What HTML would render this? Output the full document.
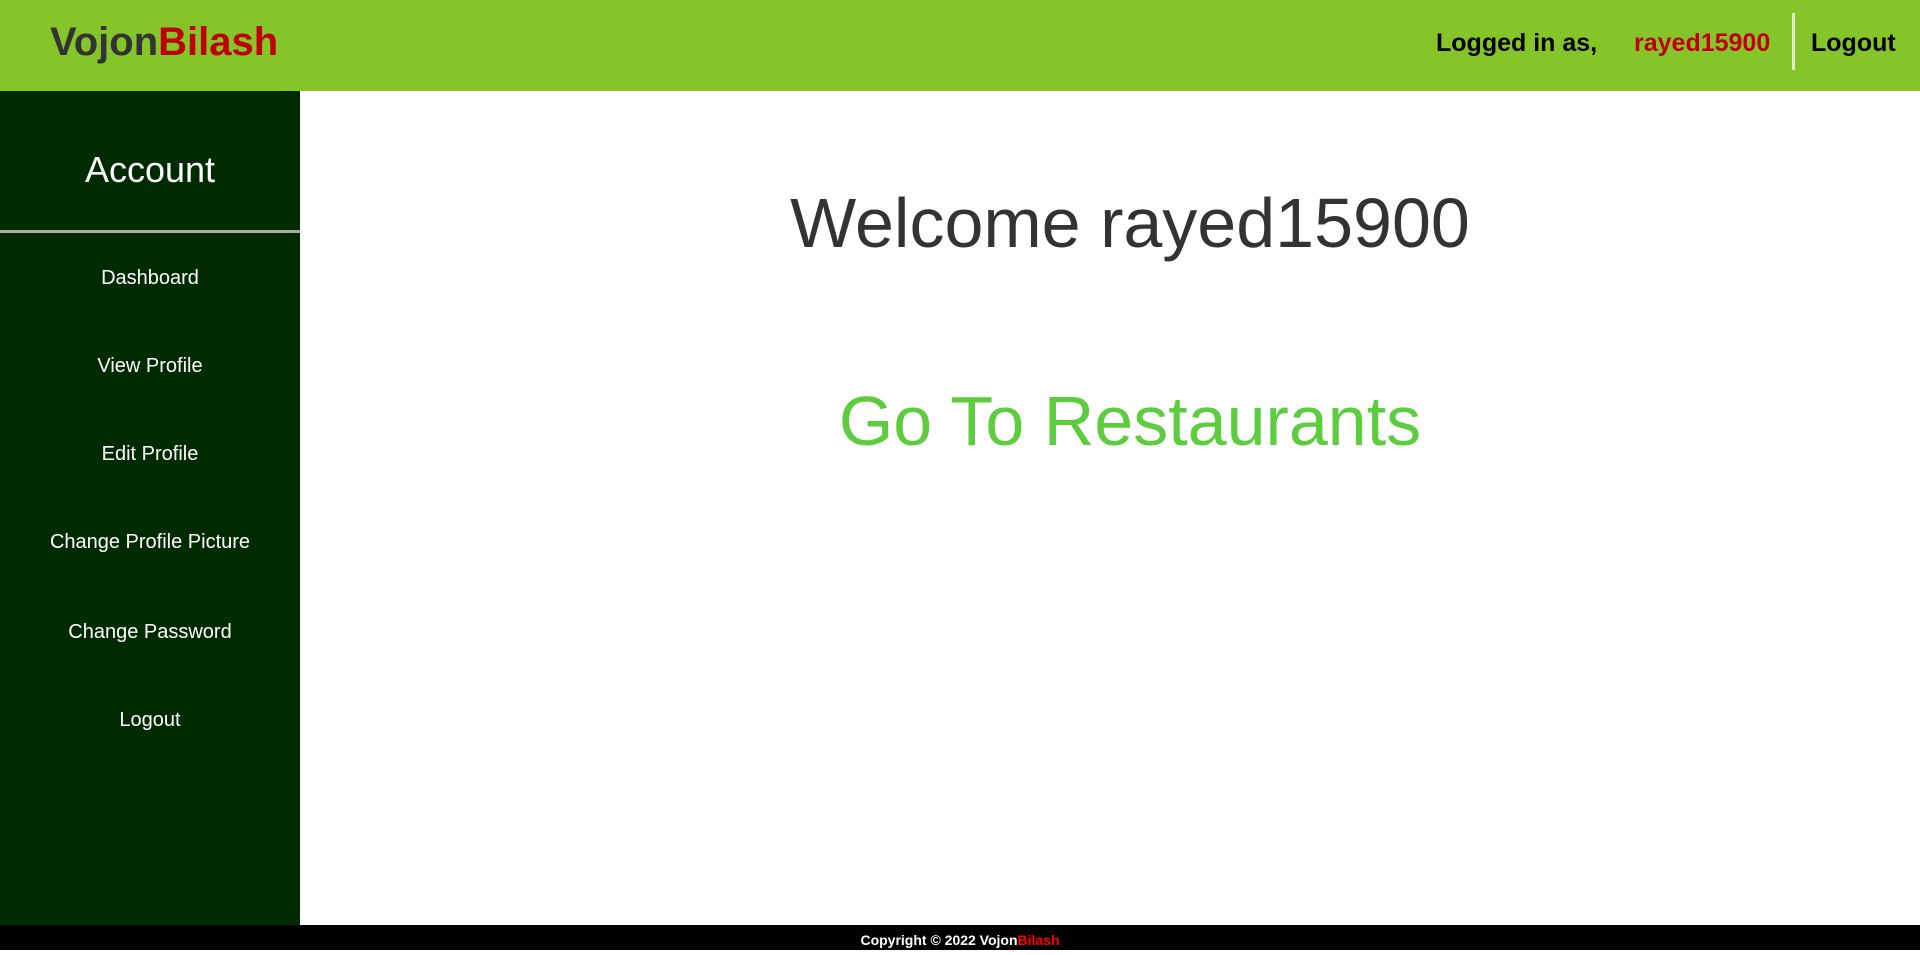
<!DOCTYPE html>
<html><head><meta charset="utf-8"><style>
*{margin:0;padding:0;box-sizing:border-box}
body{width:1920px;height:950px;overflow:hidden;font-family:"Liberation Sans",Arial,sans-serif;background:#fff;position:relative}
.hdr{position:absolute;left:0;top:0;width:1920px;height:91px;background:#85c52a}
.logo{position:absolute;left:50px;top:20px;font-size:40px;font-weight:bold;color:#333;line-height:45px}
.red{color:#c00000}
.r{position:absolute;top:28px;font-size:25px;font-weight:bold;line-height:30px;color:#000;white-space:nowrap}
.div{position:absolute;left:1792px;top:13px;width:3px;height:57px;background:#dff0c4}
.side{position:absolute;left:0;top:91px;width:300px;height:834px;background:#002a00}
.acc{position:absolute;left:0;width:300px;top:149px;text-align:center;color:#fff;font-size:36px;line-height:42px}
.line{position:absolute;left:0;top:230px;width:300px;height:3px;background:#aaa}
.m{position:absolute;left:0;width:300px;text-align:center;color:#fff;font-size:20px;line-height:24px}
.c{position:absolute;left:300px;width:1660px;text-align:center;white-space:nowrap}
.foot{position:absolute;left:0;top:925px;width:1920px;height:25px;background:#000;color:#fff;font-size:14px;font-weight:bold;text-align:center;line-height:30px}
.foot span{color:#f00}
</style></head><body>
<div class="hdr">
<div class="logo">Vojon<span class="red">Bilash</span></div>
<div class="r" style="left:1436px">Logged in as,</div>
<div class="r" style="left:1634px;color:#c00000">rayed15900</div>
<div class="div"></div>
<div class="r" style="left:1811px">Logout</div>
</div>
<div class="side"></div>
<div class="acc">Account</div>
<div class="line"></div>
<div class="m" style="top:266px">Dashboard</div>
<div class="m" style="top:354px">View Profile</div>
<div class="m" style="top:442px">Edit Profile</div>
<div class="m" style="top:530px">Change Profile Picture</div>
<div class="m" style="top:620px">Change Password</div>
<div class="m" style="top:708px">Logout</div>
<div class="c" style="top:183px;font-size:70px;line-height:80px;color:#333">Welcome rayed15900</div>
<div class="c" style="top:381px;font-size:70px;line-height:80px;color:#5ecc3f">Go To Restaurants</div>
<div class="foot">Copyright © 2022 Vojon<span>Bilash</span></div>
</body></html>
